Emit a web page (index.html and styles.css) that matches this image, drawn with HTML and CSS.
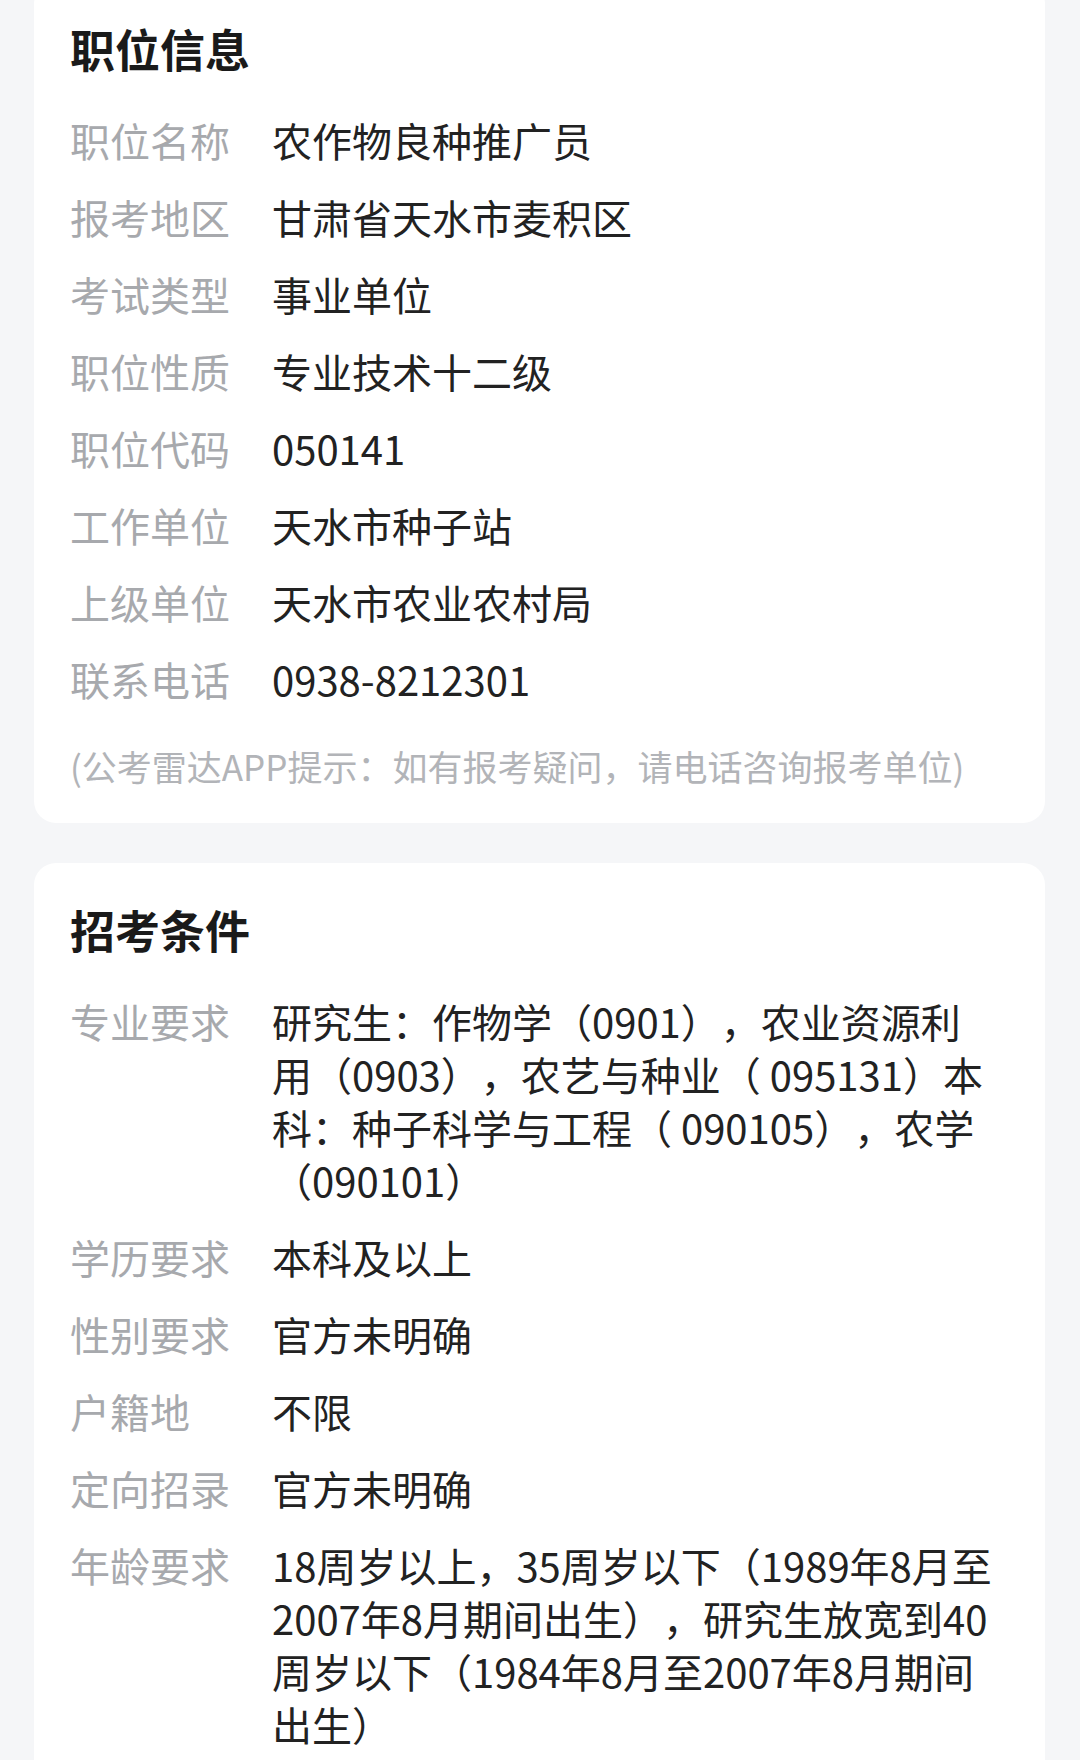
FILE: index.html
```html
<!DOCTYPE html>
<html lang="zh-CN">
<head>
<meta charset="utf-8">
<title>职位详情</title>
<link rel="stylesheet" href="styles.css">
</head>
<body>
<div class="page">
  <section class="card">
    <h2 class="card-title">职位信息</h2>
    <dl class="info">
      <div class="row"><dt>职位名称</dt><dd>农作物良种推广员</dd></div>
      <div class="row"><dt>报考地区</dt><dd>甘肃省天水市麦积区</dd></div>
      <div class="row"><dt>考试类型</dt><dd>事业单位</dd></div>
      <div class="row"><dt>职位性质</dt><dd>专业技术十二级</dd></div>
      <div class="row"><dt>职位代码</dt><dd>050141</dd></div>
      <div class="row"><dt>工作单位</dt><dd>天水市种子站</dd></div>
      <div class="row"><dt>上级单位</dt><dd>天水市农业农村局</dd></div>
      <div class="row"><dt>联系电话</dt><dd>0938-8212301</dd></div>
    </dl>
    <p class="tip">(公考雷达APP提示：如有报考疑问，请电话咨询报考单位)</p>
  </section>

  <section class="card">
    <h2 class="card-title">招考条件</h2>
    <dl class="info">
      <div class="row"><dt>专业要求</dt><dd>研究生：作物学（0901），农业资源利用（0903），农艺与种业（ 095131）本科：种子科学与工程（ 090105），农学（090101）</dd></div>
      <div class="row"><dt>学历要求</dt><dd>本科及以上</dd></div>
      <div class="row"><dt>性别要求</dt><dd>官方未明确</dd></div>
      <div class="row"><dt>户籍地</dt><dd>不限</dd></div>
      <div class="row"><dt>定向招录</dt><dd>官方未明确</dd></div>
      <div class="row"><dt>年龄要求</dt><dd>18周岁以上，35周岁以下（1989年8月至2007年8月期间出生），研究生放宽到40周岁以下（1984年8月至2007年8月期间出生）</dd></div>
    </dl>
  </section>
</div>
</body>
</html>
```

FILE: styles.css
```css
html, body {
  margin: 0;
  padding: 0;
  background: #f5f6f8;
}

body {
  font-family: "Noto Sans CJK SC", "Noto Sans", sans-serif;
  color: #1f1f1f;
  text-spacing-trim: space-all;
}

.page {
  margin-top: -18px;
  padding: 0 35px 0 34px;
  display: flex;
  flex-direction: column;
  gap: 40px;
}

.card {
  background: #ffffff;
  border-radius: 22px;
  padding: 37px 36px 33px 36px;
}

.card-title {
  margin: 0 0 35px 0;
  font-size: 45px;
  line-height: 60px;
  font-weight: 700;
  color: #1a1a1a;
}

.info {
  margin: 0;
  display: flex;
  flex-direction: column;
  gap: 24px;
}

.row {
  display: grid;
  grid-template-columns: 202px 722px;
  font-size: 40px;
  line-height: 53px;
}

.row dt {
  color: #a7a9ad;
}

.row dd {
  margin: 0;
  color: #222222;
}

.tip {
  margin: 36px 0 0 0;
  font-size: 35px;
  line-height: 48px;
  color: #b2b4b8;
  white-space: nowrap;
}
```
